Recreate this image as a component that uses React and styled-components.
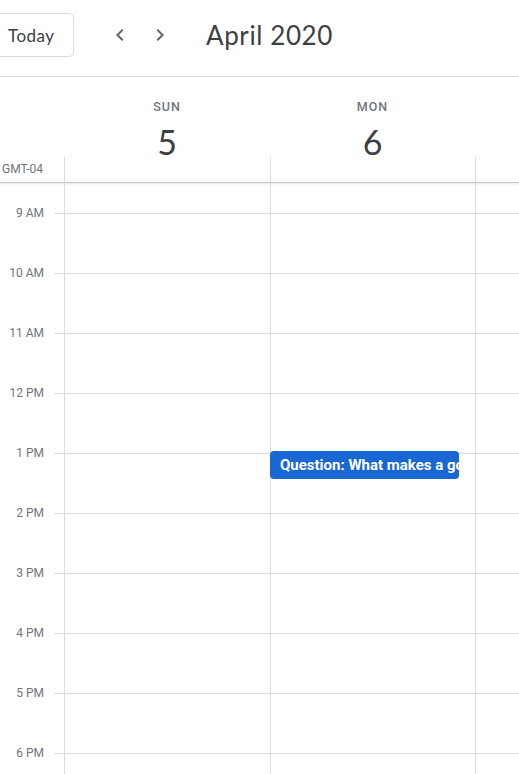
import React from 'react';
import styled, { createGlobalStyle } from 'styled-components';

const GlobalStyle = createGlobalStyle`
    html, body {
        margin: 0;
        padding: 0;
        background: #fff;
        overflow: hidden;
    }
    body {
        font-family: Roboto, "Liberation Sans", sans-serif;
    }
`;

const Page = styled.div`
    width: 519px;
    height: 774px;
    overflow: hidden;
    background: #fff;
`;

const Header = styled.div`
    display: flex;
    align-items: center;
    padding: 13px 0 19px;
    margin-left: -9px;
    border-bottom: 1px solid #dadce0;
`;

const TodayButton = styled.button`
    height: 44px;
    width: 83px;
    padding: 0 0 0 16px;
    text-align: left;
    border: 1px solid #dadce0;
    border-radius: 5px;
    background: #fff;
    color: #3c4043;
    font-family: Lato, "Open Sans", sans-serif;
    font-size: 17px;
    letter-spacing: 0.5px;
    margin-right: 26px;
`;

const NavButton = styled.button`
    width: 40px;
    height: 40px;
    border: none;
    background: none;
    padding: 0;
    display: flex;
    align-items: center;
    justify-content: center;
    color: #5f6368;
`;

const Title = styled.div`
    margin-left: 26px;
    font-family: Lato, "Open Sans", sans-serif;
    font-size: 26px;
    color: #3c4043;
    letter-spacing: 0.6px;
`;

const Columns = styled.div`
    display: grid;
    grid-template-columns: 64px 206px 205px 1fr;
`;

const DayHead = styled.div`
    height: 80px;
    display: flex;
    flex-direction: column;
    align-items: center;
    padding-top: 22px;
    box-sizing: border-box;
`;

const DayName = styled.div`
    font-size: 12.5px;
    font-weight: 500;
    letter-spacing: 1px;
    color: #70757a;
    line-height: 16px;
`;

const DayNum = styled.div`
    font-family: Lato, "Open Sans", sans-serif;
    font-size: 34px;
    color: #3c4043;
    line-height: 40px;
    margin-top: 7px;
`;

const AllDay = styled(Columns)`
    height: 25px;
    border-bottom: 1px solid #c6c7ca;
    box-shadow: 0 1px 2px rgba(60, 64, 67, 0.12);
    position: relative;
`;

const Zone = styled.div`
    font-size: 12px;
    color: #70757a;
    padding: 5px 0 0 2px;
    white-space: nowrap;
`;

const Cell = styled.div`
    border-left: 1px solid #dadce0;
    position: relative;
`;

const Gutter = styled.div`
    padding-top: 30px;
`;

const HourLabel = styled.div`
    height: 60px;
    position: relative;
    border-top: 1px solid transparent;
    box-sizing: border-box;

    span {
        position: absolute;
        right: 20px;
        top: -9px;
        font-size: 12px;
        color: #70757a;
        line-height: 16px;
        white-space: nowrap;
    }

    &::after {
        content: '';
        position: absolute;
        left: 54px;
        right: 0;
        top: -1px;
        border-top: 1px solid #dadce0;
    }
`;

const DayColumn = styled(Cell)`
    padding-top: 30px;
`;

const HourSlot = styled.div`
    height: 60px;
    border-top: 1px solid #dadce0;
    box-sizing: border-box;
`;

const Event = styled.div`
    position: absolute;
    left: -1px;
    width: 189px;
    height: 28px;
    background: #1967d2;
    border-radius: 4px;
    color: #fff;
    font-size: 15px;
    font-weight: 700;
    line-height: 28px;
    padding-left: 10px;
    box-sizing: border-box;
    white-space: nowrap;
    overflow: hidden;
`;

const Chevron = ({ dir }) => (
    <svg width="24" height="24" viewBox="0 0 24 24" fill="currentColor">
        {dir === 'left'
            ? <path d="M15.41 7.41L14 6l-6 6 6 6 1.41-1.41L10.83 12z" />
            : <path d="M8.59 16.59L10 18l6-6-6-6-1.41 1.41L13.17 12z" />}
    </svg>
);

const hours = ['9 AM', '10 AM', '11 AM', '12 PM', '1 PM', '2 PM', '3 PM', '4 PM', '5 PM', '6 PM'];
const days = [{ name: 'SUN', num: 5 }, { name: 'MON', num: 6 }];

const Slots = () => hours.map(h => <HourSlot key={h} />);

export default function App() {
    return (
        <Page>
            <GlobalStyle />
            <Header>
                <TodayButton>Today</TodayButton>
                <NavButton><Chevron dir="left" /></NavButton>
                <NavButton><Chevron dir="right" /></NavButton>
                <Title>April 2020</Title>
            </Header>
            <Columns>
                <div />
                {days.map(d => (
                    <DayHead key={d.name}>
                        <DayName>{d.name}</DayName>
                        <DayNum>{d.num}</DayNum>
                    </DayHead>
                ))}
                <div />
            </Columns>
            <AllDay>
                <Zone>GMT-04</Zone>
                <Cell />
                <Cell />
                <Cell />
            </AllDay>
            <Columns>
                <Gutter>
                    {hours.map(h => (
                        <HourLabel key={h}><span>{h}</span></HourLabel>
                    ))}
                </Gutter>
                <DayColumn><Slots /></DayColumn>
                <DayColumn>
                    <Slots />
                    <Event style={{ top: 268 }}>Question: What makes a good question?</Event>
                </DayColumn>
                <DayColumn><Slots /></DayColumn>
            </Columns>
        </Page>
    );
}
